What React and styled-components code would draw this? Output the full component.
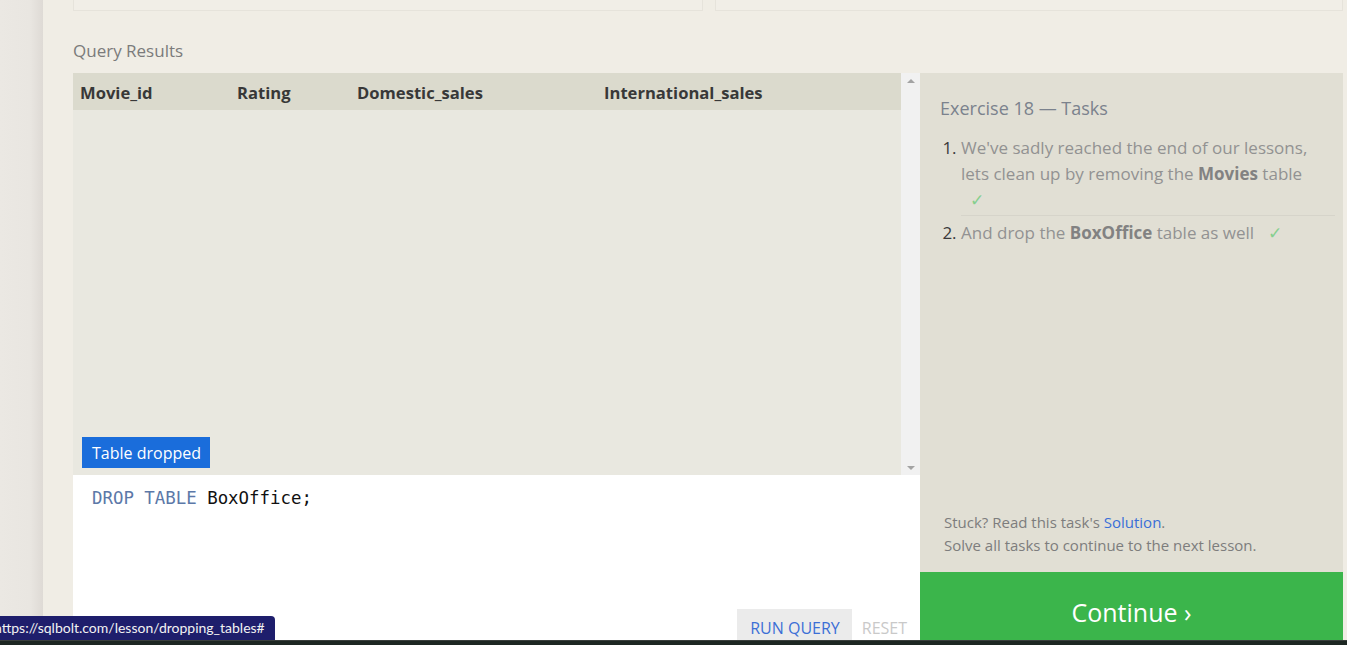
import styled, { createGlobalStyle } from 'styled-components';

const GlobalStyle = createGlobalStyle`
  html, body {
    margin: 0;
    padding: 0;
    overflow: hidden;
    background: #ebe8e3;
    font-family: "Open Sans", "Liberation Sans", sans-serif;
  }
`;

const Page = styled.div`
  position: relative;
  display: flex;
  flex-direction: column;
  width: 1347px;
  height: 645px;
  overflow: hidden;
`;

const Body = styled.div`
  display: flex;
  flex: 1;
  min-height: 0;
`;

const Gutter = styled.div`
  width: 43px;
  flex-shrink: 0;
  background: linear-gradient(to right, #ebe8e3 0%, #e9e6e1 70%, #dedad5 100%);
`;

const Main = styled.div`
  flex: 1;
  display: flex;
  flex-direction: column;
  background: #f0ede5;
  padding: 0 4px 0 30px;
  min-width: 0;
`;

const TopRow = styled.div`
  display: grid;
  grid-template-columns: 630px 1fr;
  gap: 12px;
  height: 11px;
  flex-shrink: 0;
`;

const TopBox = styled.div`
  border: 1px solid #e6e3db;
  border-top: none;
  background: #f1eee7;
`;

const SectionTitle = styled.div`
  margin: 28px 0 0;
  height: 34px;
  font-size: 17px;
  color: #7b7b7b;
  line-height: 24px;
`;

const Workspace = styled.div`
  display: flex;
  height: 567px;
  flex-shrink: 0;
`;

const LeftCol = styled.div`
  width: 847px;
  display: flex;
  flex-direction: column;
`;

const Results = styled.div`
  display: flex;
  height: 402px;
  flex-shrink: 0;
`;

const TableArea = styled.div`
  position: relative;
  flex: 1;
  background: #e9e8e0;
`;

const HeaderRow = styled.div`
  display: grid;
  grid-template-columns: 157px 120px 247px 1fr;
  height: 37px;
  align-items: center;
  background: #dbdacd;
  padding-left: 7px;
`;

const HeaderCell = styled.div`
  font-weight: 700;
  font-size: 16.6px;
  color: #383838;
  padding-top: 2px;
`;

const Badge = styled.div`
  position: absolute;
  left: 9px;
  bottom: 7px;
  height: 31px;
  padding: 0 9px 0 10px;
  display: flex;
  align-items: center;
  background: #1a6ddb;
  color: #fff;
  font-size: 16px;
`;

const Scrollbar = styled.div`
  width: 19px;
  background: #f1f1f1;
  display: flex;
  flex-direction: column;
  justify-content: space-between;
  align-items: center;
  padding: 6px 0 5px;
`;

const Arrow = styled.div`
  width: 0;
  height: 0;
  border-left: 4px solid transparent;
  border-right: 4px solid transparent;
  ${p => p.down
    ? 'border-top: 4px solid #a3a3a3;'
    : 'border-bottom: 4px solid #a3a3a3;'}
`;

const Editor = styled.div`
  flex: 1;
  background: #fff;
  display: flex;
  flex-direction: column;
  justify-content: space-between;
  padding: 11px 0 0 19px;
`;

const Code = styled.div`
  font-family: "DejaVu Sans Mono", "Liberation Mono", monospace;
  font-size: 17.4px;
  line-height: 24px;
  color: #111;
`;

const Keyword = styled.span`
  color: #5c78a8;
`;

const EditorButtons = styled.div`
  display: flex;
  justify-content: flex-end;
  align-items: flex-end;
`;

const EditorButton = styled.div`
  height: 32px;
  padding: ${p => (p.primary ? '6px 12px 0 13px' : '6px 13px 0 10px')};
  display: flex;
  align-items: center;
  box-sizing: border-box;
  font-size: 16px;
  background: ${p => (p.primary ? '#ebebeb' : 'transparent')};
  color: ${p => (p.primary ? '#3c6fd6' : '#c9c9c9')};
  margin-bottom: -1px;
`;

const RightCol = styled.div`
  width: 423px;
  display: flex;
  flex-direction: column;
`;

const Tasks = styled.div`
  flex: 1;
  background: #e1dfd4;
  display: flex;
  flex-direction: column;
  justify-content: space-between;
  padding: 22px 8px 15px 20px;
`;

const TasksTitle = styled.div`
  font-size: 18px;
  line-height: 26px;
  color: #7b828d;
`;

const TaskList = styled.ol`
  margin: 14px 0 0;
  padding: 0 0 0 21px;
`;

const TaskItem = styled.li`
  font-size: 17px;
  line-height: 26px;
  color: #929292;
  padding: ${p => (p.first ? '0 0 2px' : '4px 0 0')};
  border-bottom: ${p => (p.first ? '1px solid #d6d4ca' : 'none')};
  &::marker {
    color: #3a3a3a;
  }
  b {
    color: #828282;
    font-weight: 700;
  }
`;

const Check = styled.span`
  display: inline-block;
  padding: 0 20px 0 9px;
  color: #86cf8f;
`;

const Help = styled.div`
  font-size: 15px;
  line-height: 23px;
  color: #7d7d7d;
  padding-left: 4px;
`;

const Link = styled.a`
  color: #3a6fd8;
  text-decoration: none;
`;

const ContinueButton = styled.div`
  height: 68px;
  background: #3bb54b;
  color: #fff;
  font-size: 25px;
  display: flex;
  justify-content: center;
  align-items: center;
  padding-top: 12px;
  box-sizing: border-box;
`;

const Taskbar = styled.div`
  height: 5px;
  flex-shrink: 0;
  background: #1d2722;
  border-top: 1px solid #3a3f3c;
  box-sizing: border-box;
`;

const StatusUrl = styled.div`
  position: absolute;
  left: 0;
  bottom: 5px;
  height: 24px;
  padding: 0 10px 0 0;
  background: #1e1e6c;
  border-top-right-radius: 4px;
  color: #f2f2f2;
  font-family: "Lato", "Open Sans", sans-serif;
  font-size: 14px;
  line-height: 24px;
  white-space: nowrap;
  text-indent: -6px;
`;

const columns = ['Movie_id', 'Rating', 'Domestic_sales', 'International_sales'];

const App = () => {
  return (
    <>
      <GlobalStyle />
      <Page>
        <Body>
          <Gutter />
          <Main>
            <TopRow>
              <TopBox />
              <TopBox />
            </TopRow>
            <SectionTitle>Query Results</SectionTitle>
            <Workspace>
              <LeftCol>
                <Results>
                  <TableArea>
                    <HeaderRow>
                      {columns.map(c => (
                        <HeaderCell key={c}>{c}</HeaderCell>
                      ))}
                    </HeaderRow>
                    <Badge>Table dropped</Badge>
                  </TableArea>
                  <Scrollbar>
                    <Arrow />
                    <Arrow down />
                  </Scrollbar>
                </Results>
                <Editor>
                  <Code>
                    <Keyword>DROP TABLE</Keyword> BoxOffice;
                  </Code>
                  <EditorButtons>
                    <EditorButton primary>RUN QUERY</EditorButton>
                    <EditorButton>RESET</EditorButton>
                  </EditorButtons>
                </Editor>
              </LeftCol>
              <RightCol>
                <Tasks>
                  <div>
                    <TasksTitle>Exercise 18 — Tasks</TasksTitle>
                    <TaskList>
                      <TaskItem first>
                        We've sadly reached the end of our lessons, lets clean up by removing the <b>Movies</b> table
                        <Check>✓</Check>
                      </TaskItem>
                      <TaskItem>
                        And drop the <b>BoxOffice</b> table as well <Check>✓</Check>
                      </TaskItem>
                    </TaskList>
                  </div>
                  <Help>
                    Stuck? Read this task's <Link href="#">Solution</Link>.
                    <br />
                    Solve all tasks to continue to the next lesson.
                  </Help>
                </Tasks>
                <ContinueButton>Continue ›</ContinueButton>
              </RightCol>
            </Workspace>
          </Main>
        </Body>
        <Taskbar />
        <StatusUrl>https://sqlbolt.com/lesson/dropping_tables#</StatusUrl>
      </Page>
    </>
  );
};

export default App;
